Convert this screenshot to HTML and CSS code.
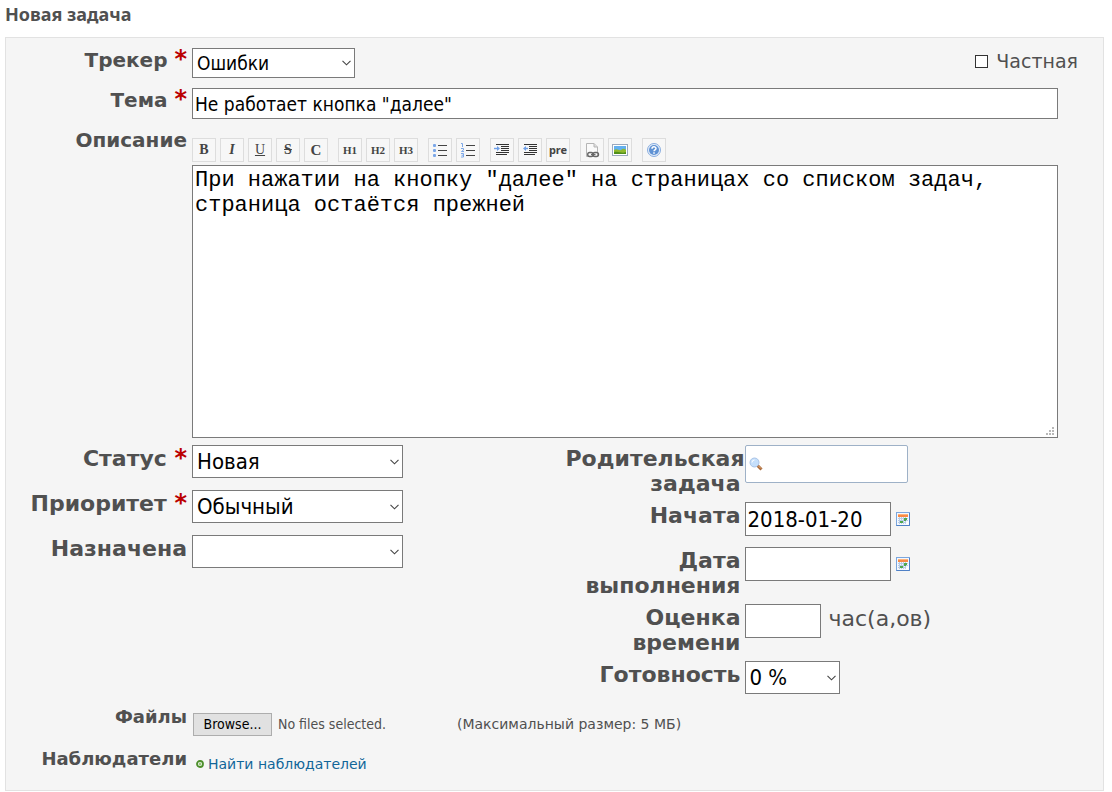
FILE: index.html
```html
<!DOCTYPE html>
<html lang="ru">
<head>
<meta charset="utf-8">
<title>Новая задача</title>
<link rel="stylesheet" href="styles.css">
</head>
<body>
<svg class="defs" aria-hidden="true">
  <symbol id="chevron" viewBox="0 0 9 6"><path d="M0.5 0.8 4.5 4.8 8.5 0.8" fill="none" stroke="#444" stroke-width="1.1"/></symbol>
  <symbol id="calendar" viewBox="0 0 14 14">
    <rect x="0.5" y="0.5" width="13" height="13" fill="#f4f8fd" stroke="#7ba6de"/>
    <path d="M0.5 13.5H13.5V1" fill="none" stroke="#4f80c6"/>
    <rect x="2" y="2" width="10" height="3" fill="#f98a45"/><path d="M2 2.5H12" stroke="#ffb27c"/>
    <path d="M2 6.5H12M2 8.5H12M2 10.5H10M3.5 5V12M5.5 5V12M7.5 5V12M9.5 5V12" stroke="#b9cce6" stroke-width="1"/>
    <path d="M8 6H11V8H10V9H8ZM4 9H7V11H4Z" fill="#4fa84d"/>
    <path d="M9 12.5 12.5 9V12.5Z" fill="#fff"/>
  </symbol>
</svg>
<h2 class="title">Новая задача</h2>
<form class="box">
  <div class="main">
    <div class="row row-tracker">
      <label class="label" for="tracker">Трекер <span class="required">*</span></label>
      <span class="select select-tracker"><select id="tracker"><option>Ошибки</option></select><svg class="chevron"><use href="#chevron"/></svg></span>
      <label class="private"><input type="checkbox" class="check">Частная</label>
    </div>
    <div class="row row-subject">
      <label class="label" for="subject">Тема <span class="required">*</span></label>
      <input class="text grow" id="subject" type="text" value="Не работает кнопка &quot;далее&quot;">
    </div>
    <div class="row row-description">
      <label class="label" for="description">Описание</label>
      <div class="editor">
        <div class="toolbar">
          <div class="group">
            <button type="button" class="tool">B</button>
            <button type="button" class="tool italic">I</button>
            <button type="button" class="tool underline">U</button>
            <button type="button" class="tool strike">S</button>
            <button type="button" class="tool code">C</button>
          </div>
          <div class="group">
            <button type="button" class="tool heading">H1</button>
            <button type="button" class="tool heading">H2</button>
            <button type="button" class="tool heading">H3</button>
          </div>
          <div class="group">
            <button type="button" class="tool" aria-label="Маркированный список"><svg viewBox="0 0 16 16"><path d="M6 3.5H15M6 8.5H15M6 13.5H15" stroke="#444"/><g fill="#7ba7e8"><rect x="1" y="2" width="3" height="3" rx="1"/><rect x="1" y="7" width="3" height="3" rx="1"/><rect x="1" y="12" width="3" height="3" rx="1"/></g></svg></button>
            <button type="button" class="tool" aria-label="Нумерованный список"><svg viewBox="0 0 16 16"><path d="M6 3.5H15M6 8.5H15M6 13.5H15" stroke="#444"/><path d="M1 1.5H2.5V5M1 6.5H3.5V8L1.5 9.5H4M1 11.5H3.5V15H1M1.5 13.2H3.5" fill="none" stroke="#7ba7e8"/></svg></button>
          </div>
          <div class="group">
            <button type="button" class="tool" aria-label="Увеличить отступ"><svg viewBox="0 0 16 16"><path d="M2 2.5H15M7 4.5H15M7 6.5H15M7 8.5H15M2 10.5H15M2 12.5H13" stroke="#333"/><path d="M0 6.5H4" stroke="#6e9fe8" stroke-width="1.4"/><path d="M3 4 6 6.5 3 9Z" fill="#6e9fe8"/></svg></button>
            <button type="button" class="tool" aria-label="Уменьшить отступ"><svg viewBox="0 0 16 16"><path d="M2 2.5H15M7 4.5H15M7 6.5H15M7 8.5H15M2 10.5H15M2 12.5H13" stroke="#333"/><path d="M3 6.5H6" stroke="#6e9fe8" stroke-width="1.4"/><path d="M4 4 1 6.5 4 9Z" fill="#6e9fe8"/></svg></button>
            <button type="button" class="tool pre">pre</button>
          </div>
          <div class="group">
            <button type="button" class="tool" aria-label="Ссылка"><svg viewBox="0 0 16 16"><path d="M2.5 1.5H10L13.5 5V14.5H2.5Z" fill="#fafafa" stroke="#b5b5b5"/><path d="M10 1.5V5H13.5" fill="#ddd" stroke="#b5b5b5"/><g fill="none" stroke="#666" stroke-width="1.4"><rect x="3.7" y="10.5" width="5.5" height="4" rx="2"/><rect x="9" y="10.5" width="5.5" height="4" rx="2"/><path d="M7 12.5H11.5"/></g></svg></button>
            <button type="button" class="tool" aria-label="Изображение"><svg viewBox="0 0 16 16"><rect x="0.5" y="2.5" width="15" height="11" fill="#fff" stroke="#9aa9bd"/><rect x="2" y="4" width="12" height="8" fill="#62b0f0"/><path d="M2 8C5 6 7 9 9 8 11 6 13 7 14 8V12H2Z" fill="#8fb92c"/><path d="M2 10C7 9 10 12 14 10V12H2Z" fill="#4f8f1b"/></svg></button>
          </div>
          <div class="group">
            <button type="button" class="tool" aria-label="Справка"><svg viewBox="0 0 16 16"><circle cx="8" cy="8" r="6.5" fill="#e4edf9" stroke="#8aaee0"/><circle cx="8" cy="8" r="5" fill="#5f92d4"/><path d="M6 6.8C6 4.2 10 4.3 10 6.5 10 8 8 7.8 8 9.3M8 10.3V11.8" fill="none" stroke="#fff" stroke-width="1.5"/></svg></button>
          </div>
        </div>
        <div class="area">
          <textarea id="description" spellcheck="false">При нажатии на кнопку "далее" на страницах со списком задач, страница остаётся прежней</textarea>
          <svg class="grip" viewBox="0 0 8 8"><path d="M6 0H8V2H6ZM3 3H5V5H3ZM6 3H8V5H6ZM0 6H2V8H0ZM3 6H5V8H3ZM6 6H8V8H6Z" fill="#b8b8b8"/></svg>
        </div>
      </div>
    </div>
  </div>
  <div class="attributes">
    <div class="column column-left">
      <div class="row">
        <label class="label" for="status">Статус <span class="required">*</span></label>
        <span class="select select-wide"><select id="status"><option>Новая</option></select><svg class="chevron"><use href="#chevron"/></svg></span>
      </div>
      <div class="row">
        <label class="label" for="priority">Приоритет <span class="required">*</span></label>
        <span class="select select-wide"><select id="priority"><option>Обычный</option></select><svg class="chevron"><use href="#chevron"/></svg></span>
      </div>
      <div class="row">
        <label class="label" for="assignee">Назначена</label>
        <span class="select select-wide"><select id="assignee"><option></option></select><svg class="chevron"><use href="#chevron"/></svg></span>
      </div>
    </div>
    <div class="column column-right">
      <div class="row">
        <label class="label" for="parent">Родительская задача</label>
        <span class="search"><input class="text" id="parent" type="text"><svg class="lens" viewBox="0 0 14 14"><path d="M8.5 8.5 12.5 12.5" stroke="#a8683a" stroke-width="3"/><path d="M9 8.5 12 11.5" stroke="#e8b27a"/><circle cx="5.5" cy="5.5" r="4.5" fill="#c5dffb" stroke="#a9c3e6"/><path d="M3 5.5A2.5 2.5 0 0 1 5.5 3" fill="none" stroke="#fff"/></svg></span>
      </div>
      <div class="row">
        <label class="label" for="start">Начата</label>
        <input class="text date" id="start" type="text" value="2018-01-20">
        <button type="button" class="pick" aria-label="Выбрать дату начала"><svg><use href="#calendar"/></svg></button>
      </div>
      <div class="row">
        <label class="label" for="due">Дата выполнения</label>
        <input class="text date" id="due" type="text">
        <button type="button" class="pick" aria-label="Выбрать дату выполнения"><svg><use href="#calendar"/></svg></button>
      </div>
      <div class="row">
        <label class="label" for="estimate">Оценка времени</label>
        <input class="text hours" id="estimate" type="text"><span class="unit">час(а,ов)</span>
      </div>
      <div class="row">
        <label class="label" for="done">Готовность</label>
        <span class="select select-done"><select id="done"><option>0 %</option></select><svg class="chevron"><use href="#chevron"/></svg></span>
      </div>
    </div>
  </div>
  <div class="extras">
    <div class="row">
      <label class="label" for="files">Файлы</label>
      <div class="files">
        <button type="button" class="browse" id="files">Browse...</button>
        <span class="file-name">No files selected.</span>
        <span class="limit">(Максимальный размер: 5 МБ)</span>
      </div>
    </div>
    <div class="row">
      <span class="label">Наблюдатели</span>
      <a class="watchers" href="#"><svg viewBox="0 0 8 8"><circle cx="4" cy="4" r="3" fill="#fff" stroke="#4d8f2c" stroke-width="1.8"/><path d="M4 2.5V5.5M2.5 4H5.5" stroke="#79b356"/></svg>Найти наблюдателей</a>
    </div>
  </div>
</form>
</body>
</html>
```
FILE: styles.css
```css
* { box-sizing: border-box; }
body {
  margin: 0 8px 0 5px;
  background: #fff;
  color: #505050;
  font-family: "DejaVu Sans", Verdana, sans-serif;
}
.defs { position: absolute; width: 0; height: 0; }
.title {
  margin: 0;
  padding: 2px 0 11px;
  font: bold 18px/24px "Noto Sans", sans-serif;
}
.box {
  padding: 10px 0 14px;
  border: 1px solid #e2e2e2;
  background: #f5f5f5;
}
.row { display: flex; align-items: flex-start; }
.label {
  flex: none;
  width: 181px;
  margin-right: 5px;
  text-align: right;
  font-weight: bold;
}
.required { color: #b00; font-size: 24px; line-height: 20px; }
.main { padding-right: 45px; font-size: 20px; line-height: 25px; }
.row-tracker { margin-bottom: 10px; }
.row-subject { margin-bottom: 9px; }
.private { margin: 0 -20px 0 auto; padding-top: 1px; display: flex; align-items: center; gap: 8px; font-size: 19px; }
.check {
  appearance: none;
  width: 13px;
  height: 13px;
  margin: 0;
  border: 1px solid #333;
  background: #fff;
}
.select { position: relative; display: block; }
.select select {
  appearance: none;
  display: block;
  width: 100%;
  margin: 0;
  padding: 0 4px;
  border: 1px solid #7a7a7a;
  border-radius: 0;
  background: #fff;
  color: #000;
  font-family: "DejaVu Sans Condensed", "Noto Sans", sans-serif;
  font-size: 19px;
  height: 30px;
}
.chevron {
  position: absolute;
  right: 4px;
  top: 50%;
  width: 9px;
  height: 6px;
  margin-top: -3px;
  pointer-events: none;
}
.select-tracker { width: 163px; }
.text {
  height: 31px;
  margin: 0;
  padding: 0 2px;
  border: 1px solid #7a7a7a;
  background: #fff;
  color: #000;
  font-family: "DejaVu Sans Condensed", "Noto Sans", sans-serif;
  font-size: 19px;
}
.grow { flex: 1; min-width: 0; }
.editor { flex: 1; min-width: 0; padding-top: 10px; }
.toolbar { display: flex; flex-wrap: wrap; gap: 10px; margin-bottom: 3px; }
.group { display: flex; gap: 4px; }
.tool {
  display: flex;
  align-items: center;
  justify-content: center;
  width: 24px;
  height: 24px;
  padding: 0;
  border: 1px solid #ddd;
  background: #f7f7f7;
  color: #444;
  font: bold 14px/16px "Liberation Serif", serif;
}
.tool svg { width: 16px; height: 16px; }
.italic { font-style: italic; }
.underline { font-weight: normal; text-decoration: underline; }
.strike { text-decoration: line-through; }
.code { font-size: 15px; }
.heading { font-size: 11px; }
.pre { font: bold 11px/16px "Noto Sans", sans-serif; }
.area { position: relative; }
textarea {
  display: block;
  width: 100%;
  height: 273px;
  margin: 0;
  padding: 2px;
  border: 1px solid #7a7a7a;
  background: #fff;
  color: #000;
  resize: none;
  font: 22px/25px "Liberation Mono", monospace;
}
.grip { position: absolute; right: 4px; bottom: 3px; width: 8px; height: 8px; }
.attributes {
  display: grid;
  grid-template-columns: 1fr 1fr;
  padding-top: 7px;
  font-size: 22px;
  line-height: 25px;
}
.attributes .text, .attributes select { font-size: 22px; }
.attributes select { height: 33px; }
.attributes .text { height: 34px; }
.attributes .label { padding-top: 1px; }
.column { display: flex; flex-direction: column; }
.column-left { gap: 12px; }
.column-right { gap: 6px; padding-left: 11px; }
.column-right .label { width: 175px; margin-right: 4px; }
.column-right .row:nth-child(2) { margin-bottom: 5px; }
.select-wide { width: 211px; }
.select-done { width: 95px; }
.search { position: relative; }
.attributes .search .text { display: block; width: 163px; height: 38px; padding-left: 20px; border-color: #9eb1c7; border-radius: 2px; }
.lens { position: absolute; left: 4px; top: 12px; width: 14px; height: 14px; }
.date { width: 146px; }
.pick { width: 14px; height: 34px; margin-left: 5px; padding: 0; border: 0; background: none; }
.pick svg { display: block; width: 14px; height: 14px; }
.hours { width: 76px; }
.unit { margin: 2px 0 0 8px; }
.extras { display: flex; flex-direction: column; gap: 11px; padding-top: 11px; font-size: 18px; line-height: 24px; }
.files { display: flex; align-items: center; padding: 7px 0 0 1px; }
.browse {
  width: 79px;
  height: 23px;
  padding: 0;
  border: 1px solid #adadad;
  background: #e1e1e1;
  color: #000;
  font: 14px "DejaVu Sans Condensed", sans-serif;
}
.file-name { width: 179px; margin-left: 6px; font: 14px "DejaVu Sans Condensed", sans-serif; }
.limit { font-size: 14px; }
.watchers {
  display: flex;
  align-items: center;
  gap: 4px;
  padding: 5px 0 0 4px;
  color: #169;
  font-size: 14px;
  text-decoration: none;
}
.watchers svg { width: 8px; height: 8px; }
```
